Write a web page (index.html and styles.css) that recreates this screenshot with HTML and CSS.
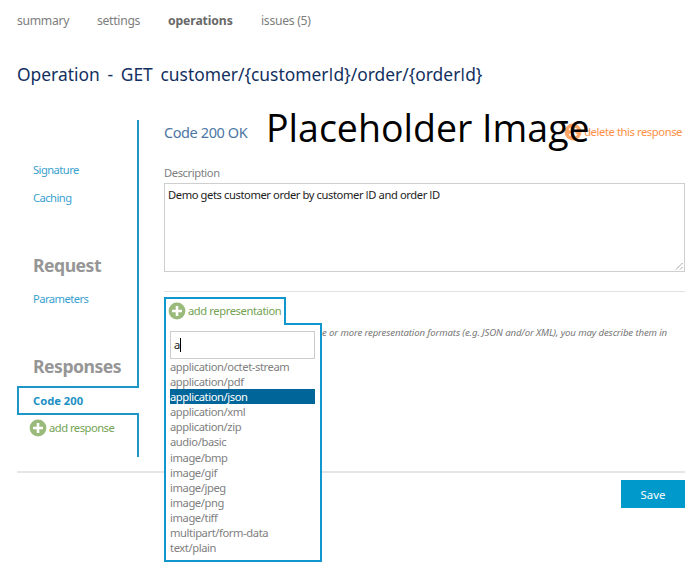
FILE: index.html
```html
<!DOCTYPE html>
<html lang="en">
<head>
<meta charset="utf-8">
<title>Operation</title>
<link rel="stylesheet" href="styles.css">
</head>
<body>
<nav class="tabs">
  <a class="summary">summary</a>
  <a class="settings">settings</a>
  <a class="operations">operations</a>
  <a class="issues">issues (5)</a>
</nav>
<h1>Operation - GET customer/{customer<span class="cap">I</span>d}/order/{order<span class="cap">I</span>d}</h1>
<div class="columns">
  <aside>
    <div class="upper">
      <a class="item">Signature</a>
      <a class="item">Caching</a>
      <h2>Request</h2>
      <a class="item">Parameters</a>
      <h2>Responses</h2>
    </div>
    <a class="active"><span>Code 200</span></a>
    <div class="lower">
      <svg width="18" height="18" viewBox="0 0 18 18"><circle cx="9" cy="9" r="8.4" fill="#9aba7c"/><path d="M9 4v10M4 9h10" stroke="#fff" stroke-width="2.6"/></svg>
      <span>add response</span>
    </div>
  </aside>
  <main>
    <header>
      <h3>Code 200 OK</h3>
      <div class="delete">
        <svg width="18" height="18" viewBox="0 0 18 18"><circle cx="9" cy="9" r="8.4" fill="#ffa566"/><path d="M5.5 5.5l7 7M12.5 5.5l-7 7" stroke="#fff" stroke-width="2.4"/></svg>
        <span>delete this response</span>
      </div>
      <div class="placeholder">Placeholder Image</div>
    </header>
    <div class="label">Description</div>
    <div class="area"><span>Demo gets customer order by customer <span class="cap">I</span>D and order <span class="cap">I</span>D</span>
      <svg width="8" height="8" viewBox="0 0 8 8"><path d="M1 7.5L7.5 1M5 7.5L7.5 5" stroke="#888" fill="none" stroke-dasharray="1.4 .5"/></svg>
    </div>
    <div class="representation">
      <p class="hint">e or more representation formats (e.g. JSON and/or XML), you may describe them in</p>
      <div class="popup">
        <div class="trigger">
          <svg width="18" height="18" viewBox="0 0 18 18"><circle cx="9" cy="9" r="8.4" fill="#9aba7c"/><path d="M9 4v10M4 9h10" stroke="#fff" stroke-width="2.6"/></svg>
          <span>add representation</span>
        </div>
        <div class="panel">
          <div class="search"><span>a</span><i></i></div>
          <ul>
            <li>application/octet-stream</li>
            <li>application/pdf</li>
            <li class="selected">application/json</li>
            <li>application/xml</li>
            <li>application/zip</li>
            <li>audio/basic</li>
            <li>image/bmp</li>
            <li>image/gif</li>
            <li>image/jpeg</li>
            <li>image/png</li>
            <li>image/tiff</li>
            <li>multipart/form-data</li>
            <li>text/plain</li>
          </ul>
        </div>
      </div>
    </div>
  </main>
</div>
<footer><button>Save</button></footer>
</body>
</html>
```
FILE: styles.css
```css
* { box-sizing: border-box; }
body {
  margin: 0;
  padding: 0 15px 0 17px;
  width: 700px;
  height: 575px;
  overflow: hidden;
  background: #fff;
  color: #808080;
  font: 11.2px/28px "Noto Sans", "Open Sans", sans-serif;
  letter-spacing: -0.41px;
  white-space: nowrap;
}
svg { display: block; flex: none; }
h1, h2, h3, p, ul { margin: 0; padding: 0; }
.cap { font-family: "Open Sans", sans-serif; }

.tabs { display: flex; height: 40px; line-height: 42px; font-size: 12.2px; letter-spacing: -0.3px; color: #7d7d7d; }
.summary { width: 80px; }
.settings { width: 71px; }
.operations { width: 93px; font-weight: 700; letter-spacing: -0.1px; color: #686868; }

h1 { height: 80px; padding-top: 19px; font-size: 17.4px; line-height: 30px; font-weight: 400; letter-spacing: 0; word-spacing: 3.2px; color: #12305f; }

.columns { display: flex; height: 351px; }
aside { width: 122px; margin-right: 25px; color: #3a9fce; }
.upper { height: 266px; padding: 36px 0 0 16px; border-right: 2px solid #1e96c8; }
.item { display: block; height: 28px; letter-spacing: -0.55px; }
h2 { height: 32px; margin: 37px 0 4px; font-size: 17.6px; line-height: 32px; letter-spacing: -0.5px; color: #969696; }
.active {
  display: block;
  height: 29px;
  padding-left: 14px;
  border: 2px solid #1e96c8;
  border-right: 0;
  line-height: 26px;
  font-weight: 700;
  letter-spacing: 0;
  color: #1c8fc4;
}
.lower { display: flex; align-items: flex-start; gap: 2px; height: 42px; padding: 4px 0 0 12px; border-right: 2px solid #1e96c8; line-height: 18px; letter-spacing: -0.5px; color: #73a353; }

main { width: 521px; }
header { position: relative; display: flex; justify-content: space-between; align-items: center; height: 24px; padding-right: 3px; }
h3 { font-size: 14.5px; font-weight: 400; color: #4d77a3; }
.delete { display: flex; align-items: center; gap: 2px; line-height: 18px; color: #ff8f45; }
.placeholder { position: absolute; left: 102px; top: -20px; font: 39px/54px "Open Sans", sans-serif; letter-spacing: 0; color: #000; transform: scaleX(0.962); transform-origin: 0 50%; }
.label { height: 39px; padding-top: 15px; }
.area { display: flex; justify-content: space-between; align-items: flex-end; height: 89px; padding: 0 1px 1px 3px; border: 1px solid #cfcfcf; color: #222; }
.area > span { align-self: flex-start; line-height: 21px; }

.representation { position: relative; margin-top: 19px; border-top: 1px solid #e2e2e2; }
.hint { padding: 33px 0 0 158px; font-size: 9.6px; line-height: 16px; font-style: italic; letter-spacing: -0.12px; color: #777; }
.popup { position: absolute; left: 0; top: 5px; width: 158px; }
.trigger { position: relative; z-index: 1; display: flex; align-items: flex-start; gap: 2px; width: 122px; height: 28px; padding: 3px 0 0 2px; border: 2px solid #1097ce; border-bottom: 0; background: #fff; line-height: 18px; color: #73a353; }
.panel { height: 239px; margin-top: -2px; padding: 6px 5px 0 4px; border: 2px solid #1097ce; background: #fff; }
.search { display: flex; align-items: center; height: 28px; padding-left: 3px; border: 1px solid #ccc; color: #222; }
.search i { width: 1px; height: 14px; background: #000; }
ul { list-style: none; }
li { height: 15.1px; line-height: 15px; }
.selected { background: #006699; color: #fff; }

footer { display: flex; justify-content: flex-end; padding-top: 7px; border-top: 2px solid #e5e5e5; }
button { width: 64px; height: 28px; padding: 0; border: 0; background: #0099cc; color: #fff; font: 11.4px "Noto Sans", sans-serif; }
```
